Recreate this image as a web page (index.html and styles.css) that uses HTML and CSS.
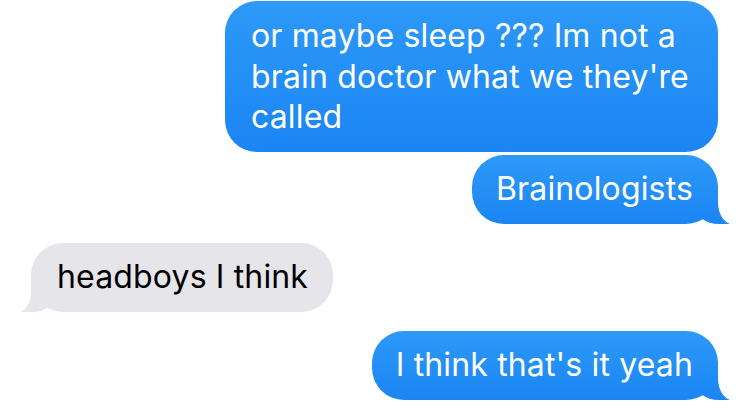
FILE: index.html
```html
<!DOCTYPE html>
<html lang="en">
<head>
<meta charset="utf-8">
<title>Messages</title>
<link rel="stylesheet" href="styles.css">
</head>
<body>
  <main class="thread">
    <div class="bubble sent first">or maybe sleep ??? Im not a brain doctor what we they're called</div>
    <div class="bubble sent tail">Brainologists</div>
    <div class="bubble received tail">headboys I think</div>
    <div class="bubble sent tail">I think that's it yeah</div>
  </main>
</body>
</html>
```
FILE: styles.css
```css
html, body {
  margin: 0;
  padding: 0;
  background: #ffffff;
}

.thread {
  width: 750px;
  height: 409px;
  box-sizing: border-box;
  padding: 1px 32px 0 31px;
  display: flex;
  flex-direction: column;
  font-family: "Inter", "Roboto", "Liberation Sans", sans-serif;
  font-size: 32px;
  letter-spacing: 0.15px;
  line-height: 40.5px;
  overflow: hidden;
}

.bubble {
  position: relative;
  box-sizing: border-box;
  max-width: 493px;
  padding: 14px 25px 14.5px 24px;
  border-radius: 32px;
}

.sent {
  align-self: flex-end;
  color: #ffffff;
  background: linear-gradient(to bottom, #2d99f8, #1b85f3);
}

.received {
  align-self: flex-start;
  color: #000000;
  background: #e5e5ea;
  padding-left: 26px;
  padding-right: 25px;
}

.first {
  padding-left: 26px;
  padding-top: 15px;
  padding-bottom: 14px;
}

.sent + .sent.tail {
  margin-top: 3px;
}

.received, .received + .sent {
  margin-top: 19px;
}

.tail::before,
.tail::after {
  content: "";
  position: absolute;
  bottom: 0;
  height: 34px;
}

.sent.tail::before {
  right: -11px;
  width: 34px;
  background: linear-gradient(to bottom, #2390f6, #1b85f3);
  border-bottom-left-radius: 24px 18px;
}

.sent.tail::after {
  right: -40px;
  width: 40px;
  background: #ffffff;
  border-bottom-left-radius: 14px 22px;
}

.received.tail::before {
  left: -9px;
  width: 34px;
  background: #e5e5ea;
  border-bottom-right-radius: 24px 18px;
}

.received.tail::after {
  left: -40px;
  width: 40px;
  background: #ffffff;
  border-bottom-right-radius: 13px 20px;
}
```
